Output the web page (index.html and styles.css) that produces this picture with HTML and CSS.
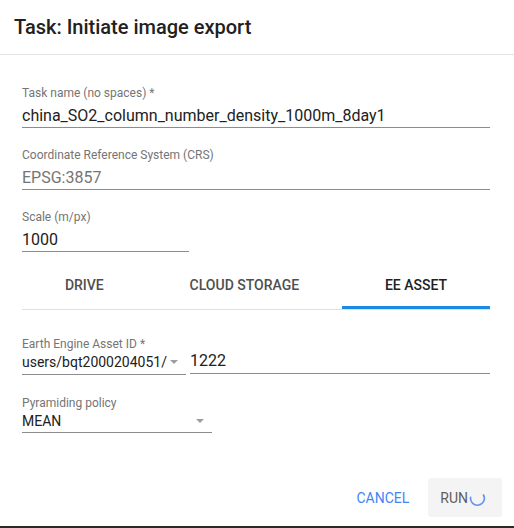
FILE: index.html
```html
<!DOCTYPE html>
<html>
<head>
<meta charset="utf-8">
<link rel="stylesheet" href="styles.css">
</head>
<body>
<div class="dialog">
  <div class="header">Task: Initiate image export</div>
  <div class="content">
    <div class="field">
      <div class="label">Task name (no spaces) *</div>
      <div class="value">china_SO2_column_number_density_1000m_8day1</div>
    </div>
    <div class="field field-crs">
      <div class="label">Coordinate Reference System (CRS)</div>
      <div class="value disabled">EPSG:3857</div>
    </div>
    <div class="field field-scale">
      <div class="label">Scale (m/px)</div>
      <div class="value">1000</div>
    </div>
    <div class="tabs">
      <div class="tab">Drive</div>
      <div class="tab">Cloud Storage</div>
      <div class="tab active">EE Asset<span class="indicator"></span></div>
    </div>
    <div class="asset-row">
      <div class="asset-col">
        <div class="label">Earth Engine Asset ID *</div>
        <div class="select"><span>users/bqt2000204051/</span><span class="arrow"></span></div>
      </div>
      <div class="asset-input">1222</div>
    </div>
    <div class="pyramid">
      <div class="label">Pyramiding policy</div>
      <div class="select"><span>MEAN</span><span class="arrow"></span></div>
    </div>
    <div class="footer">
      <div class="btn cancel">CANCEL</div>
      <div class="btn run">RUN<svg class="spinner" width="17" height="17" viewBox="0 0 17 17"><path d="M1.6 7.4 A6.9 6.9 0 1 0 14.5 5" fill="none" stroke="#5f93f0" stroke-width="1.6" stroke-linecap="round"/></svg></div>
    </div>
  </div>
</div>
<div class="backdrop"></div>
</body>
</html>
```
FILE: styles.css
```css
html, body {
  margin: 0;
  padding: 0;
}
body {
  width: 514px;
  height: 528px;
  overflow: hidden;
  background: #24251f;
  font-family: Roboto, "Noto Sans", sans-serif;
}
.dialog {
  background: #ffffff;
  height: 526px;
  display: flex;
  flex-direction: column;
}
.header {
  padding: 15px 14px 15px;
  font-size: 20px;
  line-height: 24px;
  font-weight: 500;
  color: #212121;
  border-bottom: 1px solid #e3e3e3;
}
.content {
  padding: 30px 24px 0 22px;
  display: flex;
  flex-direction: column;
}
.field {
  display: flex;
  flex-direction: column;
  border-bottom: 1px solid rgba(0,0,0,0.45);
}
.field-crs {
  margin-top: 18.5px;
}
.field-scale {
  margin-top: 19.5px;
  width: 167px;
}
.label {
  font-size: 12px;
  line-height: 16px;
  color: #757575;
}
.value {
  margin-top: 5px;
  font-size: 16px;
  line-height: 20px;
  padding-bottom: 1px;
  color: #212121;
}
.value.disabled {
  color: #757575;
}
.tabs {
  margin-top: 9px;
  display: flex;
  height: 48px;
  border-bottom: 1px solid #e0e0e0;
}
.tab {
  flex: 1 1 auto;
  padding: 0 12px;
  position: relative;
  display: flex;
  align-items: center;
  justify-content: center;
  font-size: 14px;
  font-weight: 500;
  text-transform: uppercase;
  color: #4f4f4f;
}
.tab.active {
  color: #212121;
}
.indicator {
  position: absolute;
  left: 0;
  right: 0;
  bottom: 0;
  height: 3px;
  background: #1a8ae6;
}
.asset-row {
  margin-top: 26px;
  display: flex;
  align-items: flex-end;
}
.asset-col {
  width: 164px;
  display: flex;
  flex-direction: column;
}
.select {
  display: flex;
  align-items: center;
  justify-content: space-between;
  font-size: 14px;
  line-height: 20px;
  color: #212121;
  padding-bottom: 2px;
  padding-right: 8px;
  border-bottom: 1px solid rgba(0,0,0,0.45);
}
.arrow {
  width: 0;
  height: 0;
  border-left: 4px solid transparent;
  border-right: 4px solid transparent;
  border-top: 4px solid #9e9e9e;
}
.asset-input {
  margin-left: 4px;
  flex: 1;
  font-size: 16px;
  line-height: 20px;
  padding-bottom: 2px;
  margin-bottom: 1px;
  color: #212121;
  border-bottom: 1px solid rgba(0,0,0,0.45);
}
.pyramid {
  margin-top: 20px;
  width: 190px;
  display: flex;
  flex-direction: column;
}
.pyramid .select {
  padding-bottom: 1px;
}
.footer {
  margin-top: 45px;
  margin-right: -12px;
  display: flex;
  justify-content: flex-end;
  align-items: center;
}
.btn {
  height: 39px;
  display: flex;
  align-items: center;
  font-size: 14px;
  border-radius: 3px;
}
.cancel {
  color: #4285f4;
  padding: 0 17px 0 16px;
  margin-right: 2px;
}
.run {
  background: #f4f4f4;
  color: #5f5f5f;
  padding: 0 16px 0 12px;
}
.spinner {
  margin-left: 1px;
  margin-top: 2px;
}
.backdrop {
  height: 2px;
  background: #2a2b25;
}
```
